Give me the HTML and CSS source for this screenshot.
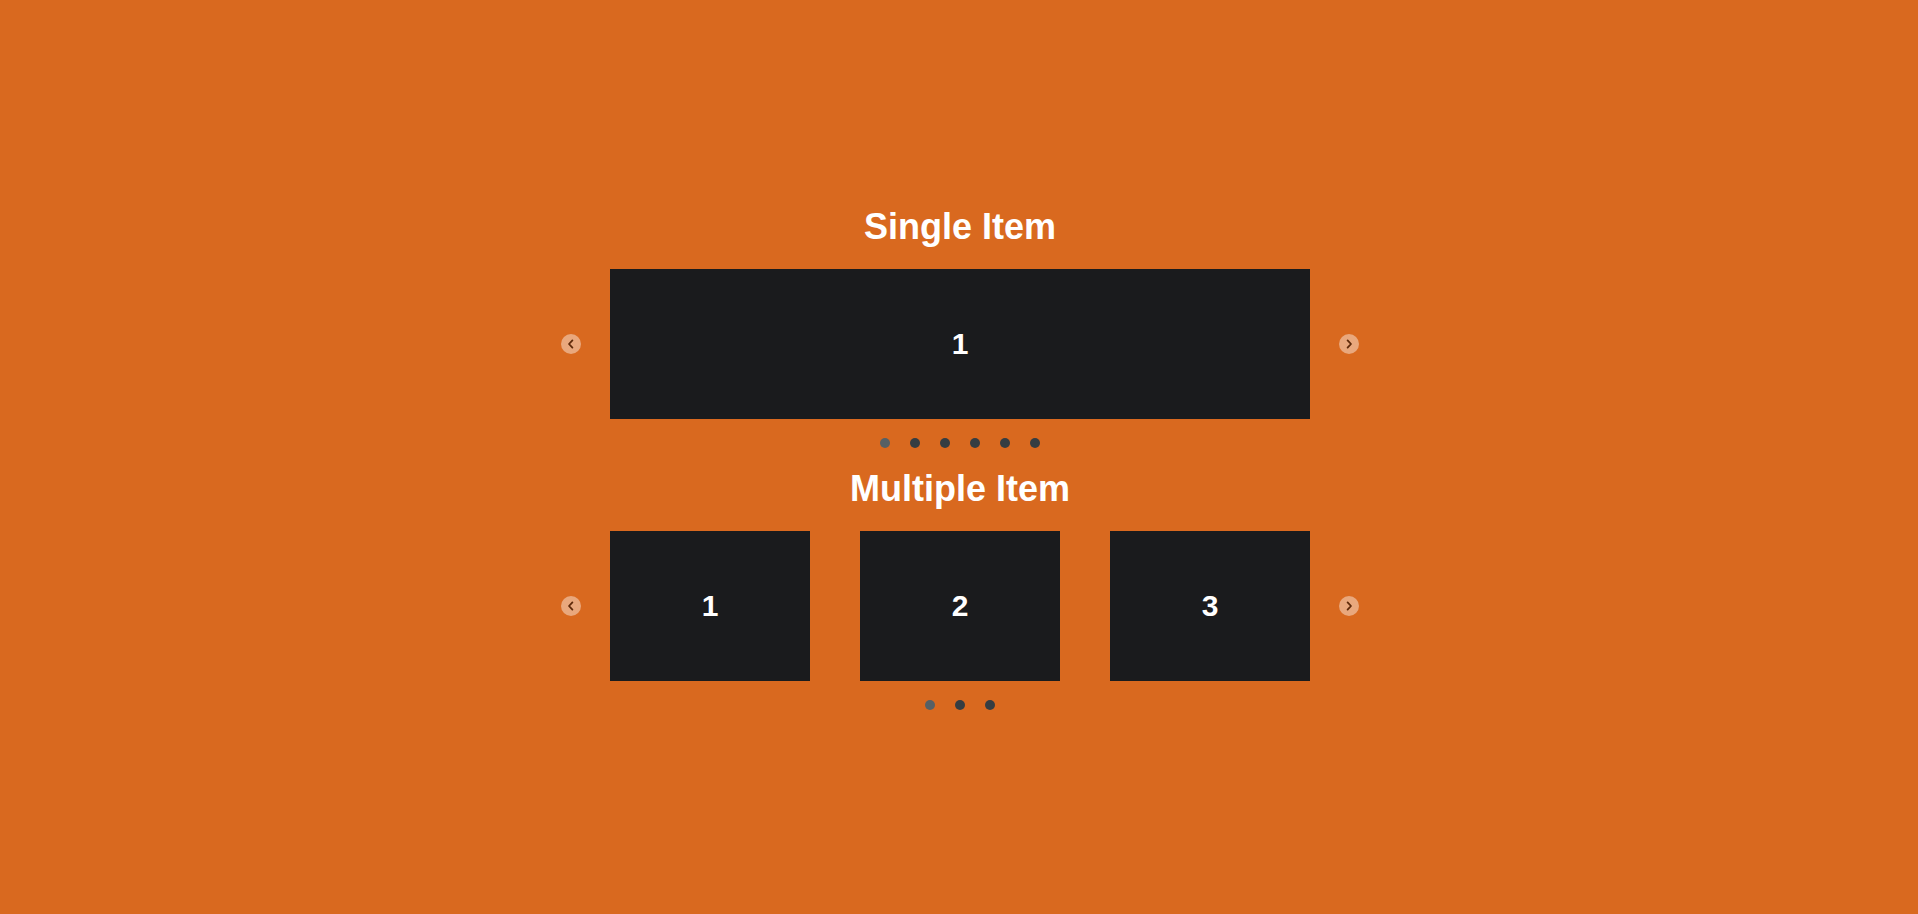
FILE: index.html
```html
<!DOCTYPE html>
<html lang="en">
<head>
<meta charset="utf-8">
<title>Carousel</title>
<link rel="stylesheet" href="styles.css">
</head>
<body>
<main class="page">
  <section class="block">
    <h2 class="title">Single Item</h2>
    <div class="carousel">
      <button class="arrow" aria-label="Previous"><svg viewBox="0 0 20 20" width="20" height="20"><path d="M11.4 6.4 L8 10 L11.4 13.6" /></svg></button>
      <div class="track">
        <div class="slide slide-wide">1</div>
      </div>
      <button class="arrow" aria-label="Next"><svg viewBox="0 0 20 20" width="20" height="20"><path d="M8.6 6.4 L12 10 L8.6 13.6" /></svg></button>
    </div>
    <div class="dots">
      <span class="dot active"></span><span class="dot"></span><span class="dot"></span><span class="dot"></span><span class="dot"></span><span class="dot"></span>
    </div>
  </section>
  <section class="block">
    <h2 class="title">Multiple Item</h2>
    <div class="carousel">
      <button class="arrow" aria-label="Previous"><svg viewBox="0 0 20 20" width="20" height="20"><path d="M11.4 6.4 L8 10 L11.4 13.6" /></svg></button>
      <div class="track track-multi">
        <div class="slide">1</div>
        <div class="slide">2</div>
        <div class="slide">3</div>
      </div>
      <button class="arrow" aria-label="Next"><svg viewBox="0 0 20 20" width="20" height="20"><path d="M8.6 6.4 L12 10 L8.6 13.6" /></svg></button>
    </div>
    <div class="dots">
      <span class="dot active"></span><span class="dot"></span><span class="dot"></span>
    </div>
  </section>
</main>
</body>
</html>
```
FILE: styles.css
```css
html, body {
  margin: 0;
  padding: 0;
  height: 100%;
}
body {
  background: #d9691f;
  font-family: "Liberation Sans", Arial, sans-serif;
  color: #fff;
}
.page {
  box-sizing: border-box;
  height: 100%;
  padding: 3px 0 0 2px;
  display: flex;
  flex-direction: column;
  align-items: center;
  justify-content: center;
  gap: 21px;
}
.block {
  display: flex;
  flex-direction: column;
  align-items: center;
}
.title {
  margin: 0;
  font-size: 36px;
  line-height: 40px;
  font-weight: bold;
  color: #fff;
}
.carousel {
  margin-top: 22px;
  display: flex;
  align-items: center;
  gap: 29px;
}
.arrow {
  width: 20px;
  height: 20px;
  padding: 0;
  border: 0;
  border-radius: 50%;
  background: rgba(255, 255, 255, 0.42);
  display: flex;
  align-items: center;
  justify-content: center;
}
.arrow svg {
  display: block;
}
.arrow path {
  fill: none;
  stroke: #5e2a0a;
  stroke-width: 1.8;
  stroke-linecap: round;
  stroke-linejoin: round;
}
.track {
  width: 700px;
  display: flex;
  gap: 50px;
}
.slide {
  width: 200px;
  height: 150px;
  background: #1a1b1d;
  color: #fff;
  font-size: 30px;
  font-weight: bold;
  display: flex;
  align-items: center;
  justify-content: center;
}
.slide-wide {
  width: 700px;
}
.dots {
  margin-top: 19px;
  display: flex;
  gap: 20px;
}
.dot {
  width: 10px;
  height: 10px;
  border-radius: 50%;
  background: #353d42;
}
.dot.active {
  background: #566065;
}
```
